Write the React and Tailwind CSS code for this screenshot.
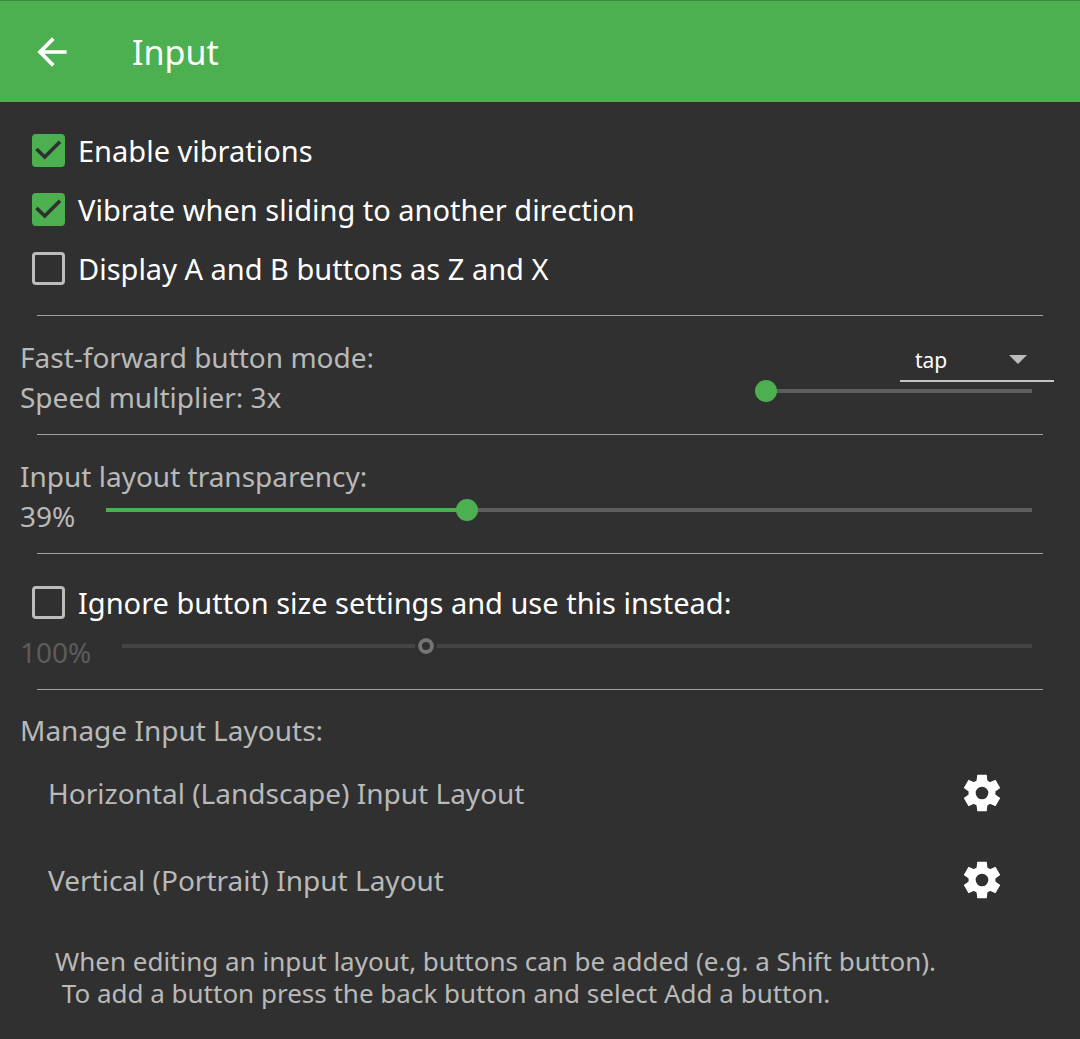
import { useState } from "react";
import { MdArrowBack } from "react-icons/md";

function CheckRow({ label, checked, onChange }) {
  return (
    <label className="flex h-[59px] cursor-pointer items-center gap-[13px] pl-8 text-[29px] text-white">
      <span className="relative flex size-[33px] shrink-0">
        <input
          type="checkbox"
          checked={checked}
          onChange={(e) => onChange(e.target.checked)}
          className="peer size-full appearance-none rounded-[4px] border-[3px] border-[#bcbcbc] checked:border-[#4caf50] checked:bg-[#4caf50]"
        />
        <svg
          viewBox="0 0 33 33"
          className="pointer-events-none absolute inset-0 hidden peer-checked:block"
          fill="none"
          stroke="#303030"
          strokeWidth="3.6"
        >
          <path d="M4.5 15 L12.7 23 L28 7.8" />
        </svg>
      </span>
      {label}
    </label>
  );
}

function Slider({ id, label, min, max, value, onChange, disabled }) {
  const fill = disabled ? 0 : ((value - min) / (max - min)) * 100;

  return (
    <input
      id={id}
      type="range"
      aria-label={label}
      min={min}
      max={max}
      value={value}
      disabled={disabled}
      onChange={(e) => onChange(Number(e.target.value))}
      style={{ "--fill": `${fill}%` }}
      className="h-[22px] w-full appearance-none bg-[linear-gradient(to_right,#4caf50_var(--fill),#5e5e5e_var(--fill))] bg-[size:calc(100%-22px)_4px] bg-center bg-no-repeat disabled:bg-[linear-gradient(#444444,#444444)] [&::-webkit-slider-thumb]:size-[22px] [&::-webkit-slider-thumb]:appearance-none [&::-webkit-slider-thumb]:rounded-full [&::-webkit-slider-thumb]:bg-[#4caf50] disabled:[&::-webkit-slider-thumb]:border-[3px] disabled:[&::-webkit-slider-thumb]:border-[#303030] disabled:[&::-webkit-slider-thumb]:bg-[#303030] disabled:[&::-webkit-slider-thumb]:shadow-[inset_0_0_0_4px_#757575]"
    />
  );
}

function Divider() {
  return <hr className="mx-[37px] mt-[17px] mb-[19px] border-[#a0a0a0]" />;
}

function GearIcon() {
  return (
    <svg viewBox="0 0 24 24" className="size-[44px]" fill="currentColor">
      <circle
        cx="12"
        cy="12"
        r="5.4"
        fill="none"
        stroke="currentColor"
        strokeWidth="3.9"
      />
      {[0, 60, 120, 180, 240, 300].map((angle) => (
        <path
          key={angle}
          d="M9.4 2h5.2l.5 5h-6.2z"
          transform={`rotate(${angle} 12 12)`}
        />
      ))}
    </svg>
  );
}

function LayoutRow({ name }) {
  return (
    <li className="flex h-[87px] items-center justify-between pr-[76px] pl-12">
      <span>{name}</span>
      <button type="button" aria-label={`Edit ${name}`} className="text-white">
        <GearIcon />
      </button>
    </li>
  );
}

function App() {
  const [vibrate, setVibrate] = useState(true);
  const [vibrateSlide, setVibrateSlide] = useState(true);
  const [showZX, setShowZX] = useState(false);
  const [mode, setMode] = useState("tap");
  const [speed, setSpeed] = useState(3);
  const [transparency, setTransparency] = useState(39);
  const [overrideSize, setOverrideSize] = useState(false);
  const [buttonSize, setButtonSize] = useState(100);

  return (
    <div className="min-h-screen bg-[#303030] font-['Noto_Sans',sans-serif] text-[28px] leading-[40px] text-[#b9b9b9]">
      <header className="flex h-[102px] items-center gap-[58px] border-t border-[#388e3c] bg-[#4caf50] pl-[30px] text-white">
        <button type="button" aria-label="Back">
          <MdArrowBack size={44} />
        </button>
        <h1 className="text-[34px]">Input</h1>
      </header>

      <main className="pt-[19px] pb-7">
        <section>
          <CheckRow
            label="Enable vibrations"
            checked={vibrate}
            onChange={setVibrate}
          />
          <CheckRow
            label="Vibrate when sliding to another direction"
            checked={vibrateSlide}
            onChange={setVibrateSlide}
          />
          <CheckRow
            label="Display A and B buttons as Z and X"
            checked={showZX}
            onChange={setShowZX}
          />
        </section>

        <Divider />

        <section className="pt-[2px]">
          <div className="flex h-[40px] items-start justify-between pr-[26px] pl-5">
            <label htmlFor="mode">Fast-forward button mode:</label>
            <div className="relative">
              <select
                id="mode"
                value={mode}
                onChange={(e) => setMode(e.target.value)}
                className="h-[42px] w-[154px] appearance-none border-b-2 border-[#c4c4c4] bg-transparent pl-[15px] text-[21px] text-white"
              >
                <option value="tap">tap</option>
                <option value="toggle">toggle</option>
              </select>
              <svg
                viewBox="0 0 18 9"
                className="pointer-events-none absolute top-[18px] right-[27px] h-[9px] w-[18px]"
                fill="#bcbcbc"
              >
                <path d="M0 0 H18 L9 9 Z" />
              </svg>
            </div>
          </div>
          <div className="flex items-start justify-between pr-[37px] pl-5">
            <label htmlFor="speed">Speed multiplier: {speed}x</label>
            <div className="flex w-[288px] pt-[3px]">
              <Slider
                id="speed"
                min={3}
                max={8}
                value={speed}
                onChange={setSpeed}
              />
            </div>
          </div>
        </section>

        <Divider />

        <section className="pt-[2px]">
          <h2 className="pl-5">Input layout transparency:</h2>
          <div className="flex items-start gap-5 pr-[37px] pl-5">
            <label htmlFor="transparency">{transparency}%</label>
            <div className="flex flex-1 pt-[3px]">
              <Slider
                id="transparency"
                label="Input layout transparency"
                min={0}
                max={100}
                value={transparency}
                onChange={setTransparency}
              />
            </div>
          </div>
        </section>

        <Divider />

        <section>
          <CheckRow
            label="Ignore button size settings and use this instead:"
            checked={overrideSize}
            onChange={setOverrideSize}
          />
          <div className="flex items-start gap-5 pr-[37px] pl-5">
            <label
              htmlFor="size"
              className={overrideSize ? "" : "text-[#5c5c5c]"}
            >
              {buttonSize}%
            </label>
            <div className="flex flex-1 pt-[3px]">
              <Slider
                id="size"
                label="Button size"
                min={50}
                max={200}
                value={buttonSize}
                onChange={setButtonSize}
                disabled={!overrideSize}
              />
            </div>
          </div>
        </section>

        <Divider />

        <section className="pt-[2px]">
          <h2 className="pl-5 leading-[38px]">Manage Input Layouts:</h2>
          <ul>
            <LayoutRow name="Horizontal (Landscape) Input Layout" />
            <LayoutRow name="Vertical (Portrait) Input Layout" />
          </ul>
          <p className="mt-[22px] pl-[55px] text-[26px] leading-8">
            When editing an input layout, buttons can be added (e.g. a Shift
            button).
            <br />
            &nbsp;To add a button press the back button and select Add a button.
          </p>
        </section>
      </main>
    </div>
  );
}

export default App;
